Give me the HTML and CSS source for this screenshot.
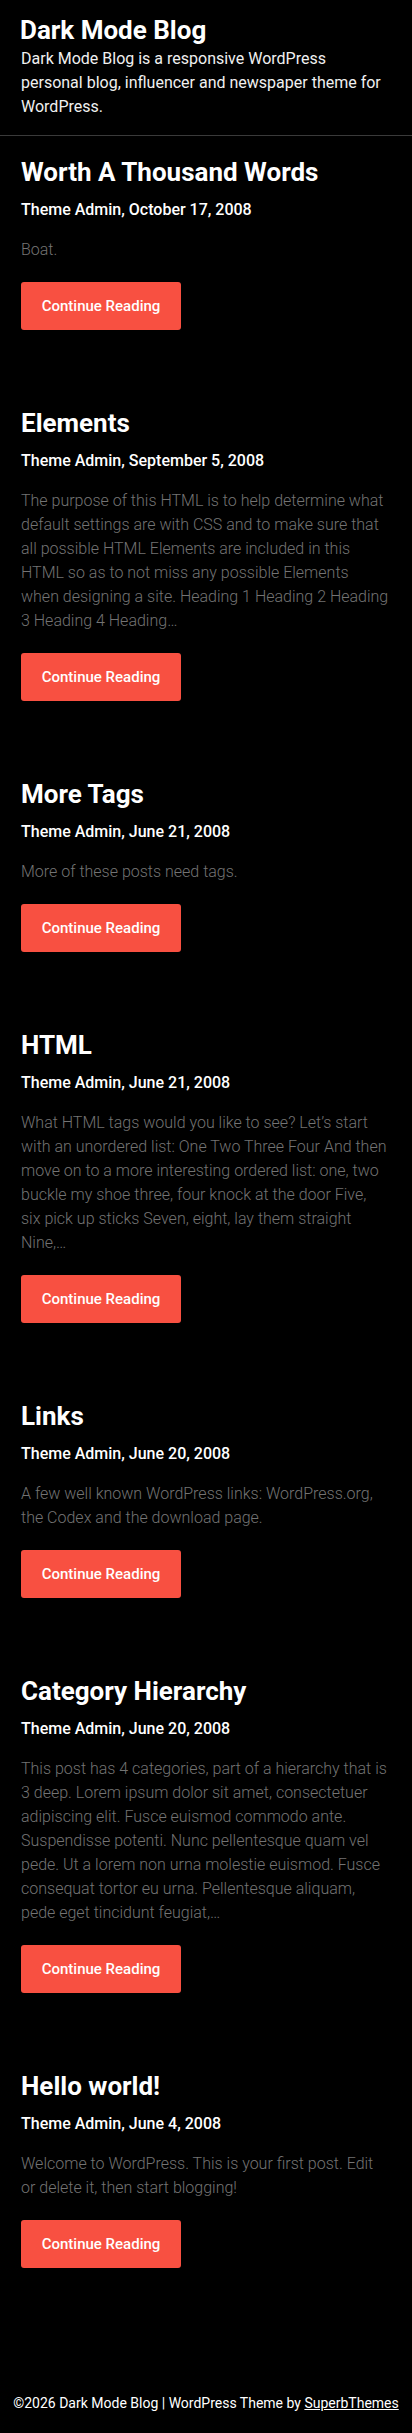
FILE: index.html
```html
<!DOCTYPE html>
<html lang="en">
<head>
<meta charset="utf-8">
<title>Dark Mode Blog</title>
<link rel="stylesheet" href="styles.css">
</head>
<body>
<header class="site-header">
  <h1 class="site-title">Dark Mode Blog</h1>
  <p class="site-desc">Dark Mode Blog is a responsive WordPress personal blog, influencer and newspaper theme for WordPress.</p>
</header>
<main class="posts">
  <article class="post">
    <h2 class="post-title">Worth A Thousand Words</h2>
    <div class="post-meta">Theme Admin, October 17, 2008</div>
    <p class="post-excerpt">Boat.</p>
    <a class="btn" href="#">Continue Reading</a>
  </article>
  <article class="post">
    <h2 class="post-title">Elements</h2>
    <div class="post-meta">Theme Admin, September 5, 2008</div>
    <p class="post-excerpt">The purpose of this HTML is to help determine what default settings are with CSS and to make sure that all possible HTML Elements are included in this HTML so as to not miss any possible Elements when designing a site. Heading 1 Heading 2 Heading 3 Heading 4 Heading…</p>
    <a class="btn" href="#">Continue Reading</a>
  </article>
  <article class="post">
    <h2 class="post-title">More Tags</h2>
    <div class="post-meta">Theme Admin, June 21, 2008</div>
    <p class="post-excerpt">More of these posts need tags.</p>
    <a class="btn" href="#">Continue Reading</a>
  </article>
  <article class="post">
    <h2 class="post-title">HTML</h2>
    <div class="post-meta">Theme Admin, June 21, 2008</div>
    <p class="post-excerpt">What HTML tags would you like to see? Let’s start with an unordered list: One Two Three Four And then move on to a more interesting ordered list: one, two buckle my shoe three, four knock at the door Five, six pick up sticks Seven, eight, lay them straight Nine,…</p>
    <a class="btn" href="#">Continue Reading</a>
  </article>
  <article class="post">
    <h2 class="post-title">Links</h2>
    <div class="post-meta">Theme Admin, June 20, 2008</div>
    <p class="post-excerpt">A few well known WordPress links: WordPress.org, the Codex and the download page.</p>
    <a class="btn" href="#">Continue Reading</a>
  </article>
  <article class="post">
    <h2 class="post-title">Category Hierarchy</h2>
    <div class="post-meta">Theme Admin, June 20, 2008</div>
    <p class="post-excerpt">This post has 4 categories, part of a hierarchy that is 3 deep. Lorem ipsum dolor sit amet, consectetuer adipiscing elit. Fusce euismod commodo ante. Suspendisse potenti. Nunc pellentesque quam vel pede. Ut a lorem non urna molestie euismod. Fusce consequat tortor eu urna. Pellentesque aliquam, pede eget tincidunt feugiat,…</p>
    <a class="btn" href="#">Continue Reading</a>
  </article>
  <article class="post">
    <h2 class="post-title">Hello world!</h2>
    <div class="post-meta">Theme Admin, June 4, 2008</div>
    <p class="post-excerpt">Welcome to WordPress. This is your first post. Edit or delete it, then start blogging!</p>
    <a class="btn" href="#">Continue Reading</a>
  </article>
</main>
<footer class="site-footer">©2026 Dark Mode Blog | WordPress Theme by <a href="#">SuperbThemes</a></footer>
</body>
</html>
```
FILE: styles.css
```css
* { box-sizing: border-box; }
html, body { margin: 0; padding: 0; background: #000; }
body {
  font-family: Roboto, "Liberation Sans", sans-serif;
  font-size: 16px;
  line-height: 24px;
  color: #fff;
}
.site-header {
  padding: 15px 23px 16px 21px;
  border-bottom: 1px solid #3a3a3a;
}
.site-title {
  margin: 0 0 1px -1px;
  font-size: 26px;
  line-height: 31px;
  font-weight: 700;
  color: #fff;
}
.site-desc {
  margin: 0;
  color: #f0f0f0;
}
.posts {
  padding: 21px 23px 0 21px;
}
.post {
  margin-bottom: 78px;
}
.post-title {
  margin: 0 0 10px;
  font-size: 26px;
  line-height: 31px;
  font-weight: 700;
  color: #fff;
}
.post-meta {
  font-size: 16px;
  font-weight: 500;
  color: #fff;
}
.post-excerpt {
  margin: 16px 0 20px;
  font-weight: 300;
  color: #737373;
}
.btn {
  display: inline-block;
  width: 160px;
  height: 48px;
  line-height: 48px;
  text-align: center;
  background: #f85041;
  color: #fff;
  border-radius: 3px;
  text-decoration: none;
  font-weight: 500;
  font-size: 15px;
}
.site-footer {
  padding: 47px 0 20px;
  font-size: 14px;
  line-height: 21px;
  text-align: center;
  color: #fff;
}
.site-footer a { color: #fff; }
```
